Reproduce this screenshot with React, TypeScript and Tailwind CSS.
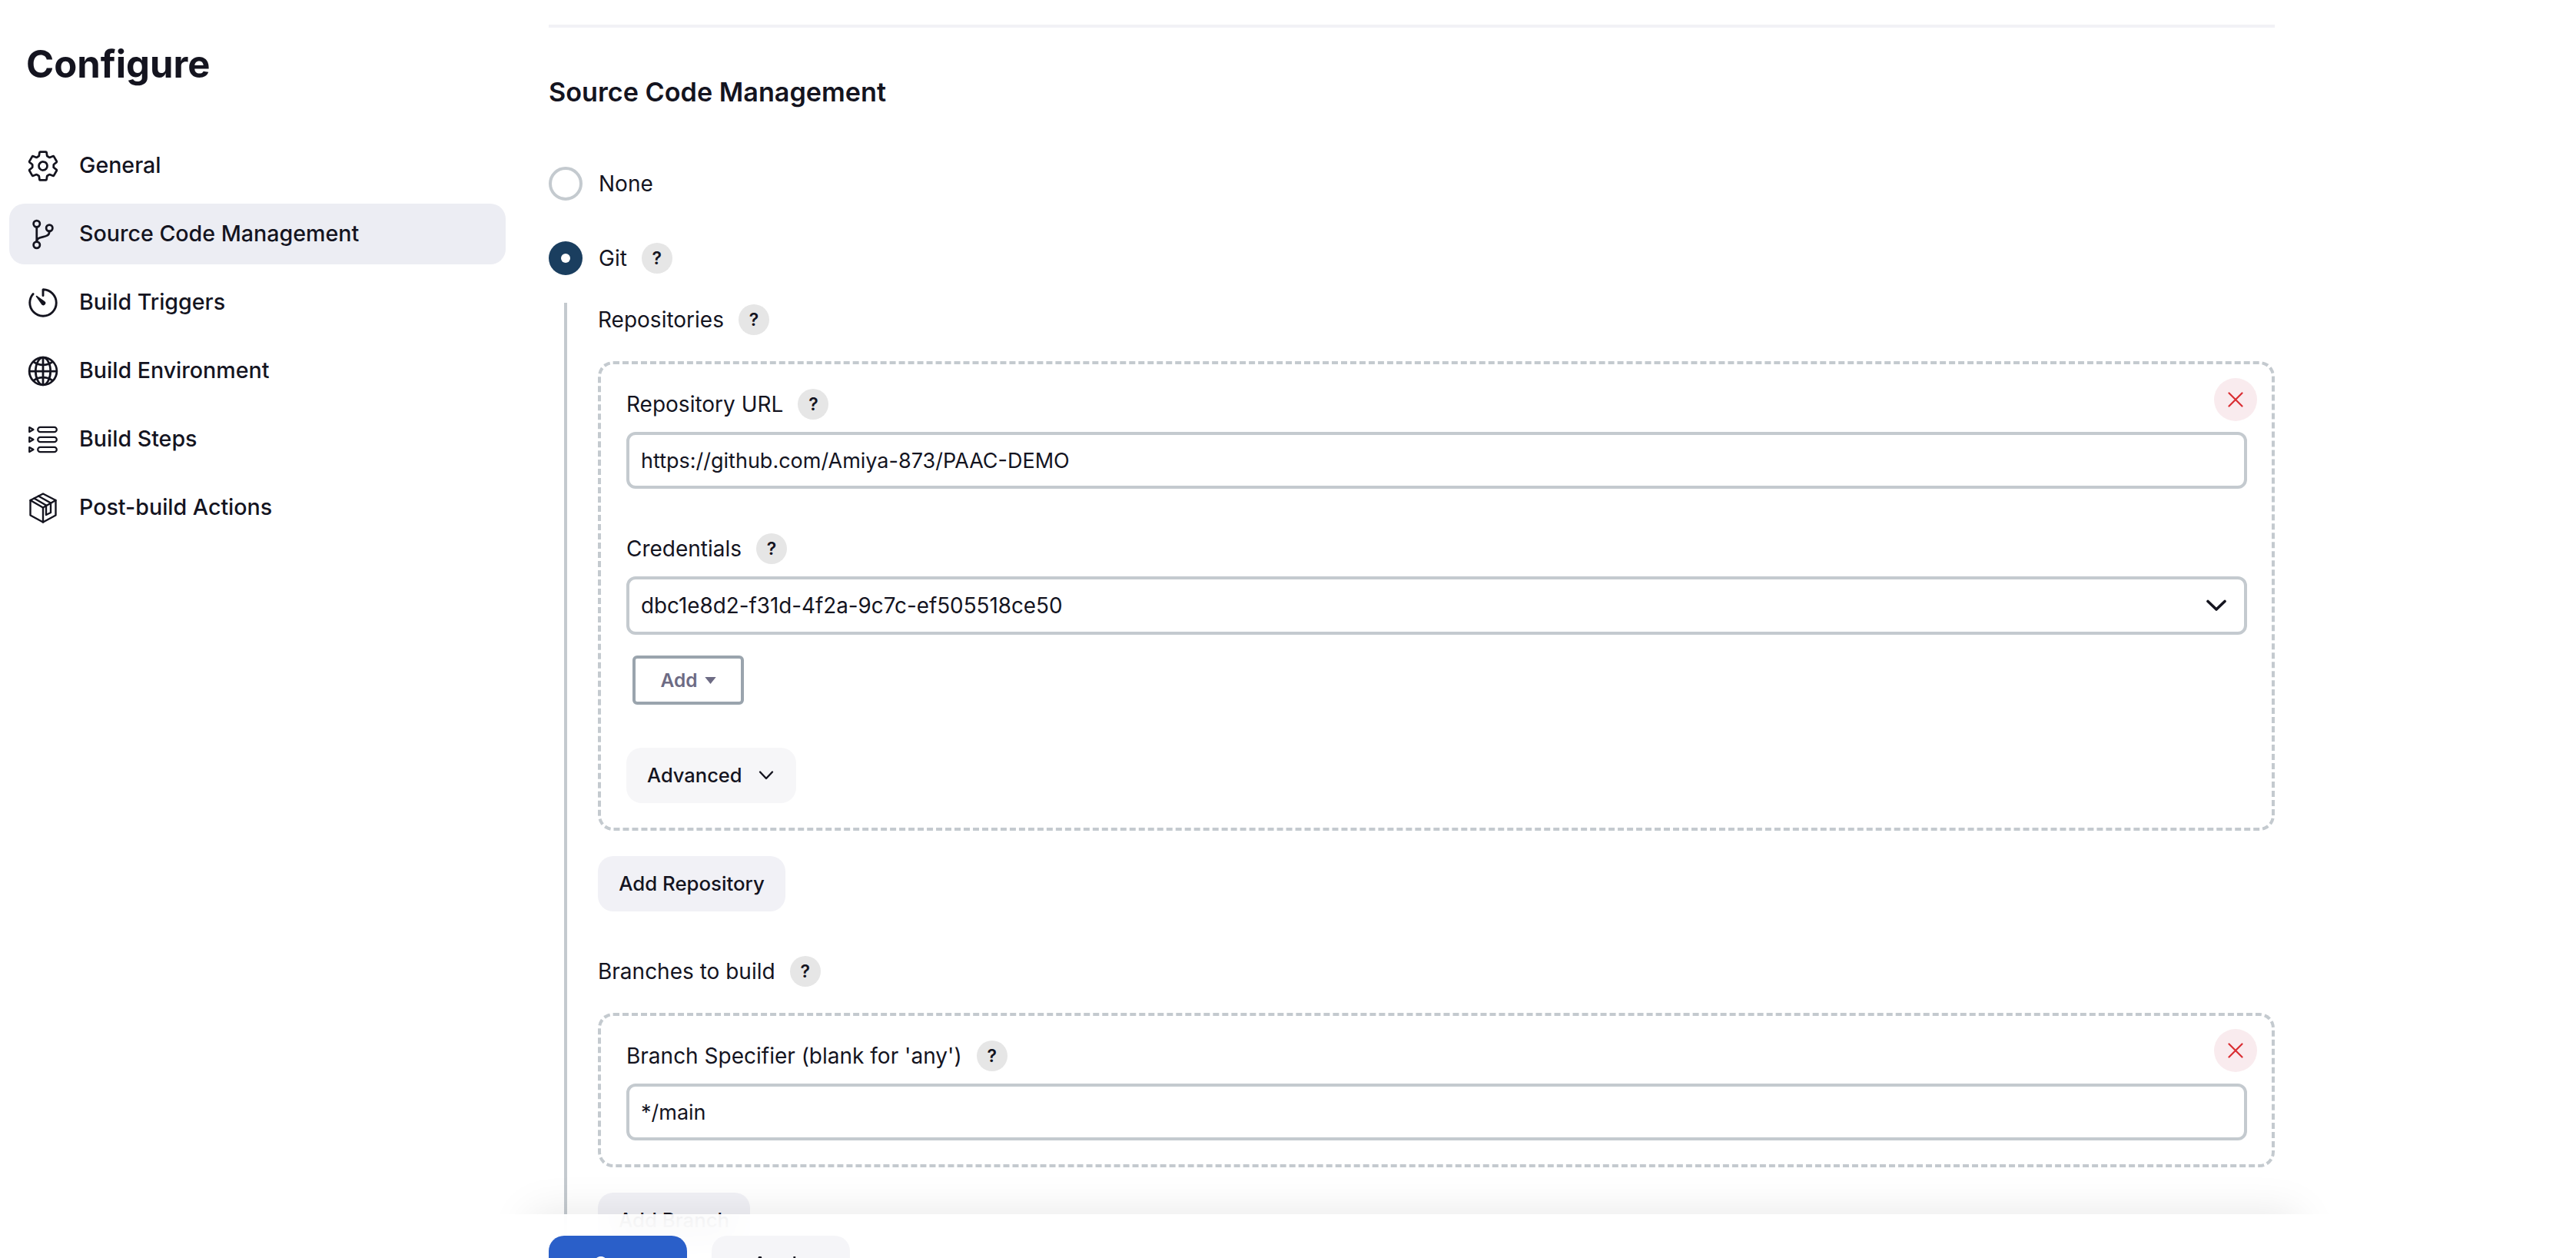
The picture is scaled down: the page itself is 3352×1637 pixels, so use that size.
import React from 'react'
import { IoSettingsOutline, IoGitBranchOutline, IoTimerOutline, IoGlobeOutline } from 'react-icons/io5'

function StepsIcon() {
  return (
    <svg viewBox="0 0 38 38" className="h-[38px] w-[38px] shrink-0" fill="none" stroke="currentColor" strokeWidth="2.2" strokeLinejoin="round">
      <path d="M1.2 3 L6.5 6 L1.2 9 Z" />
      <path d="M1.2 16 L6.5 19 L1.2 22 Z" />
      <path d="M1.2 29 L6.5 32 L1.2 35 Z" />
      <rect x="12.2" y="2.8" width="24.6" height="6.4" rx="3.2" />
      <rect x="12.2" y="15.8" width="24.6" height="6.4" rx="3.2" />
      <rect x="12.2" y="28.8" width="24.6" height="6.4" rx="3.2" />
    </svg>
  )
}

function PackageIcon() {
  return (
    <svg viewBox="0 0 38 40" className="h-[40px] w-[38px] shrink-0" fill="none" stroke="currentColor" strokeWidth="2.4" strokeLinejoin="round" strokeLinecap="round">
      <path d="M19 1.5 L35.5 10 V29.5 L19 38.5 L2.5 29.5 V10 Z" />
      <path d="M2.5 10 L19 19.5 L35.5 10" />
      <path d="M19 19.5 V38.5" />
      <path d="M7.5 7.5 L23 16.5 V29 L29 26 V13.5 L13 4.5" />
    </svg>
  )
}

const navItems = [
  { label: 'General', icon: <IoSettingsOutline className="h-[44px] w-[44px] shrink-0" /> },
  { label: 'Source Code Management', icon: <IoGitBranchOutline className="h-[44px] w-[44px] shrink-0" />, active: true },
  { label: 'Build Triggers', icon: <IoTimerOutline className="h-[46px] w-[46px] shrink-0" /> },
  { label: 'Build Environment', icon: <IoGlobeOutline className="h-[44px] w-[44px] shrink-0" /> },
  { label: 'Build Steps', icon: <StepsIcon /> },
  { label: 'Post-build Actions', icon: <PackageIcon /> },
]

function Help() {
  return (
    <span className="flex h-[40px] w-[40px] items-center justify-center rounded-full bg-[#e6e6e6] text-[23px] font-semibold text-[#14141f]">
      ?
    </span>
  )
}

function Label({ text }: { text: string }) {
  return (
    <div className="flex h-[40px] items-center gap-[19px] text-[28px] text-[#14141f]">
      <span>{text}</span>
      <Help />
    </div>
  )
}

function CloseButton({ className }: { className: string }) {
  return (
    <button className={`absolute right-[19px] flex h-[56px] w-[56px] items-center justify-center rounded-full bg-[#f9ebee] ${className}`}>
      <svg viewBox="0 0 20 20" className="h-[20px] w-[20px]" stroke="#d92d32" strokeWidth="2.2" strokeLinecap="round">
        <path d="M1.5 1.5 L18.5 18.5 M18.5 1.5 L1.5 18.5" />
      </svg>
    </button>
  )
}

function Field({ value, className = 'h-[74px] text-[27px]', chevron = false }: { value: string; className?: string; chevron?: boolean }) {
  return (
    <div className={`mt-[16px] flex items-center justify-between rounded-[12px] border-4 border-[#c4cacf] bg-white pl-[15px] pr-[23px] text-[#14141f] ${className}`}>
      <span className="translate-y-[1px]">{value}</span>
      {chevron && (
        <svg viewBox="0 0 26 16" className="h-[16px] w-[26px]" fill="none" stroke="#14141f" strokeWidth="3.6" strokeLinecap="round" strokeLinejoin="round">
          <path d="M2 2.5 L13 13 L24 2.5" />
        </svg>
      )}
    </div>
  )
}

export default function App() {
  return (
    <div className="relative flex h-[1637px] w-[3352px] overflow-hidden bg-white font-['Inter',sans-serif] text-[#14141f]">
      {/* Sidebar */}
      <aside className="w-[714px] shrink-0 px-[12px]">
        <h1 className="ml-[22px] mt-[52px] h-[64px] text-[49px] font-bold leading-[64px]">Configure</h1>
        <nav className="mt-[60px] flex w-[646px] flex-col gap-[10px]">
          {navItems.map((item) => (
            <div
              key={item.label}
              className={`flex h-[79px] items-center rounded-[20px] text-[28.6px] font-medium ${item.active ? 'bg-[#ecedf3]' : ''}`}
            >
              <span className="ml-[22px] flex w-[44px] items-center justify-center">{item.icon}</span>
              <span className="ml-[25px]">{item.label}</span>
            </div>
          ))}
        </nav>
      </aside>

      {/* Main form */}
      <main className="w-[2246px] shrink-0 pt-[32px]">
        <div className="h-[4px] bg-[#f2f2f6]" />
        <h2 className="mt-[62px] h-[44px] text-[34.2px] font-semibold leading-[44px]">Source Code Management</h2>

        <div className="mt-[75px] flex h-[44px] items-center gap-[21px] text-[28px]">
          <span className="h-[44px] w-[44px] rounded-full border-4 border-[#c4cacf]" />
          <span>None</span>
        </div>
        <div className="mt-[53px] flex h-[44px] items-center text-[28px]">
          <span className="flex h-[44px] w-[44px] items-center justify-center rounded-full bg-[#1a3e5f]">
            <span className="h-[12px] w-[12px] rounded-full bg-white" />
          </span>
          <span className="ml-[21px]">Git</span>
          <span className="ml-[19px]"><Help /></span>
        </div>

        <div className="ml-[20px] mt-[36px] border-l-4 border-[#c4cacf] pb-[200px] pl-[40px] pt-[2px]">
          <Label text="Repositories" />
          <div className="relative mt-[34px] rounded-[20px] border-4 border-dashed border-[#c4cacf] pb-[32px] pl-[33px] pr-[32px] pt-[32px]">
            <CloseButton className="top-[18px]" />
            <Label text="Repository URL" />
            <Field value="https://github.com/Amiya-873/PAAC-DEMO" />
            <div className="mt-[58px]">
              <Label text="Credentials" />
            </div>
            <Field value="dbc1e8d2-f31d-4f2a-9c7c-ef505518ce50" className="h-[76px] text-[27.8px]" chevron />
            <button className="ml-[8px] mt-[27px] flex h-[64px] w-[145px] items-center justify-center gap-[9px] rounded-[6px] border-4 border-[#9aa4ad] text-[24.5px] font-semibold text-[#6d6b84]">
              Add
              <svg viewBox="0 0 16 10" className="h-[9px] w-[15px]" fill="#6d6b84"><path d="M0 0 H16 L8 10 Z" /></svg>
            </button>
            <button className="mt-[56px] flex h-[72px] w-[221px] items-center rounded-[20px] bg-[#f6f6f8] pl-[27px] text-[25.5px] font-medium">
              Advanced
              <svg viewBox="0 0 20 14" className="ml-[21px] h-[14px] w-[20px]" fill="none" stroke="#14141f" strokeWidth="2.4" strokeLinecap="round" strokeLinejoin="round"><path d="M2 2.5 L10 11 L18 2.5" /></svg>
            </button>
          </div>
          <button className="mt-[33px] flex h-[72px] w-[244px] items-center justify-center rounded-[20px] bg-[#f1f1f6] text-[25.8px] font-medium">
            Add Repository
          </button>

          <div className="mt-[58px]">
            <Label text="Branches to build" />
          </div>
          <div className="relative mt-[34px] rounded-[20px] border-4 border-dashed border-[#c4cacf] pb-[31px] pl-[33px] pr-[32px] pt-[32px]">
            <CloseButton className="top-[17px]" />
            <Label text="Branch Specifier (blank for 'any')" />
            <Field value="*/main" />
          </div>
          <button className="mt-[33px] flex h-[72px] w-[198px] items-center justify-center rounded-[20px] bg-[#f1f1f6] text-[25.8px] font-medium">
            Add Branch
          </button>
        </div>
      </main>

      {/* Sticky save bar */}
      <div className="absolute bottom-[57px] left-0 h-[70px] w-full overflow-hidden">
        <div className="absolute left-[690px] top-[70px] h-[60px] w-[2300px] shadow-[0_0_55px_rgba(0,0,0,0.1)]" />
      </div>
      <div className="absolute bottom-0 left-0 flex h-[57px] w-full gap-[32px] bg-white/90 pl-[714px] pt-[28px] backdrop-blur-[20px]">
        <button className="h-[72px] w-[180px] shrink-0 rounded-[20px] bg-[#2a5fc9] text-[26px] font-semibold text-white">Save</button>
        <button className="h-[72px] w-[180px] shrink-0 rounded-[20px] bg-[#f5f5f8] text-[26px] font-medium">Apply</button>
      </div>
    </div>
  )
}
